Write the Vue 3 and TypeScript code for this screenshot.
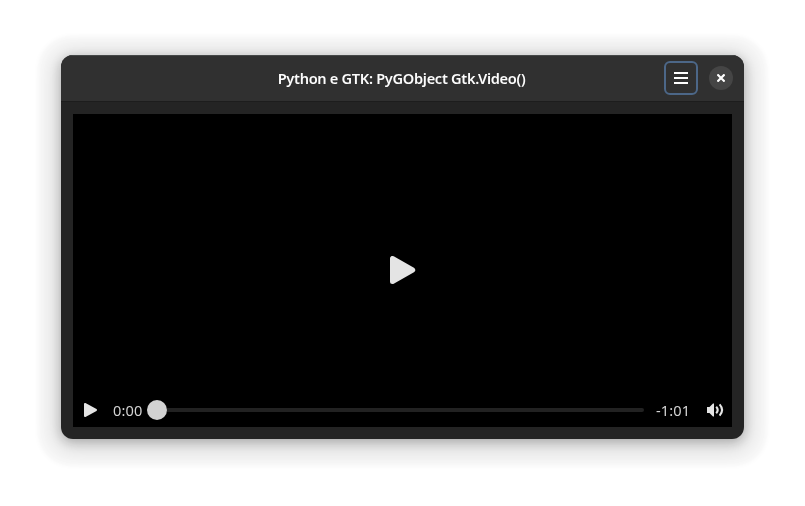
<script setup lang="ts">
const title = 'Python e GTK: PyGObject Gtk.Video()'
const elapsed = '0:00'
const remaining = '-1:01'
</script>

<template>
  <main class="desktop">
    <section class="window">
      <header class="headerbar">
        <h1 class="title">{{ title }}</h1>
        <div class="actions">
          <button class="menu" aria-label="Menu">
            <svg width="14" height="12" viewBox="0 0 14 12" shape-rendering="crispEdges">
              <path d="M0 0h14v2H0zM0 5h14v2H0zM0 10h14v2H0z" fill="#fff" />
            </svg>
          </button>
          <button class="close" aria-label="Close">
            <svg width="8" height="8" viewBox="0 0 8 8">
              <path d="M1.2 1.2l5.6 5.6M6.8 1.2L1.2 6.8" stroke="#fff" stroke-width="2.2" stroke-linecap="square" />
            </svg>
          </button>
        </div>
      </header>
      <div class="video">
        <div class="stage">
          <svg width="26" height="28" viewBox="0 0 26 28">
            <path d="M2.5 2.5v23L22.7 14z" fill="#e4e4e4" stroke="#e4e4e4" stroke-width="5" stroke-linejoin="round" />
          </svg>
        </div>
        <div class="controls">
          <svg class="play" width="13" height="14" viewBox="0 0 13 14">
            <path d="M1 1v12L12 7z" fill="#e4e4e4" stroke="#e4e4e4" stroke-width="2" stroke-linejoin="round" />
          </svg>
          <span class="elapsed">{{ elapsed }}</span>
          <div class="slider">
            <div class="knob"></div>
            <div class="track"></div>
          </div>
          <span class="remaining">{{ remaining }}</span>
          <svg class="volume" width="17" height="16" viewBox="0 0 17 16" fill="none">
            <path d="M0 5h2.5L6 1.5h1v13H6L2.5 11H0z" fill="#e4e4e4" />
            <path d="M9.2 4.8q3 3.2 0 6.4" stroke="#e4e4e4" stroke-width="2.1" />
            <path d="M12.6 2.4q5 5.6 0 11.2" stroke="#e4e4e4" stroke-width="2.1" />
          </svg>
        </div>
      </div>
    </section>
  </main>
</template>

<style>
body {
  background: #fff;
}
</style>

<style scoped>
.desktop {
  box-sizing: border-box;
  width: 805px;
  height: 506px;
  padding: 55px 61px 67px;
  overflow: hidden;
  font-family: "Noto Sans", sans-serif;
}
.window {
  box-sizing: border-box;
  height: 384px;
  display: flex;
  flex-direction: column;
  border-radius: 12px;
  background: #242424;
  overflow: hidden;
  box-shadow: 0 4px 5px 23px rgba(0, 0, 0, 0.03), 0 4px 20px 7px rgba(0, 0, 0, 0.12), 0 3px 11px rgba(0, 0, 0, 0.22);
}
.headerbar {
  box-sizing: border-box;
  height: 47px;
  flex: none;
  display: grid;
  grid-template-columns: 1fr auto 1fr;
  align-items: center;
  padding: 0 12px 1px 10px;
  background: #303030;
  border-bottom: 1px solid #1d1d1d;
  box-shadow: inset 0 1px #454848;
}
.title {
  grid-column: 2;
  margin: 0;
  color: #fff;
  font-size: 14.6px;
  font-weight: 600;
  letter-spacing: -0.31px;
  line-height: 20px;
  white-space: nowrap;
  opacity: 0.99;
  will-change: opacity;
}
.actions {
  display: flex;
  justify-content: flex-end;
  align-items: center;
  gap: 11px;
  margin-right: -1px;
}
button {
  box-sizing: border-box;
  display: flex;
  align-items: center;
  justify-content: center;
  padding: 0;
}
.menu {
  width: 34px;
  height: 34px;
  border: 2px solid #4c6788;
  border-radius: 6px;
  background: #303030;
}
.close {
  width: 24px;
  height: 24px;
  border: 0;
  border-radius: 50%;
  background: #454545;
}
.video {
  box-sizing: border-box;
  flex: 1;
  display: flex;
  flex-direction: column;
  margin: 12px;
  background: #000;
}
.stage {
  flex: 1;
  display: flex;
  align-items: flex-end;
  justify-content: center;
  padding-bottom: 109px;
}
.controls {
  height: 34px;
  display: flex;
  align-items: center;
  padding: 0 8px 0 11px;
  color: #d6d6d6;
  font-size: 14.6px;
  font-weight: 400;
  letter-spacing: 0.1px;
}
.elapsed,
.remaining {
  white-space: nowrap;
  opacity: 0.99;
  will-change: opacity;
}
.elapsed {
  width: 34px;
  margin-left: 16px;
}
.slider {
  flex: 1;
  display: flex;
  align-items: center;
}
.knob {
  width: 20px;
  height: 20px;
  border-radius: 50%;
  background: #d2d2d2;
}
.track {
  flex: 1;
  height: 4px;
  border-radius: 0 2px 2px 0;
  background: #222;
}
.remaining {
  width: 39px;
  margin-left: 12px;
}
.volume {
  margin-left: 12px;
}
svg {
  flex: none;
  display: block;
}
</style>
